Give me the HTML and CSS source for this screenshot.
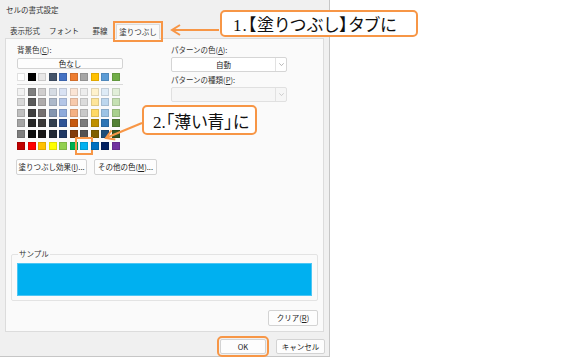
FILE: index.html
```
<html>
    <head>
        <title>セルの書式設定</title>
        <link rel="stylesheet" href="styles.css">
    </head>
    <body>
        <div class="dialog">
            <div class="titlebar">セルの書式設定</div>
            <div class="tabs">
                <span class="tab t1">表示形式</span>
                <span class="tab t2">フォント</span>
                <span class="tab t3">罫線</span>
                <span class="tab t4 active hl">塗りつぶし</span>
            </div>
            <div class="pane">
                <div class="cols">
                    <div class="bgcol">
                        <div class="label">背景色(<u>C</u>):</div>
                        <div class="btn nocolor">色なし</div>
                        <div class="swatches">
                            <i style="background:#ffffff"></i><i style="background:#000000"></i><i style="background:#e7e6e6"></i><i style="background:#44546a"></i><i style="background:#4472c4"></i><i style="background:#ed7d31"></i><i style="background:#a5a5a5"></i><i style="background:#ffc000"></i><i style="background:#5b9bd5"></i><i style="background:#70ad47"></i>
                        </div>
                        <div class="sep"></div>
                        <div class="swatches tints">
                            <i style="background:#f2f2f2"></i><i style="background:#7f7f7f"></i><i style="background:#d0cece"></i><i style="background:#d6dce4"></i><i style="background:#d9e2f3"></i><i style="background:#fbe5d5"></i><i style="background:#ededed"></i><i style="background:#fff2cc"></i><i style="background:#deebf6"></i><i style="background:#e2efd9"></i>
                            <i style="background:#d8d8d8"></i><i style="background:#595959"></i><i style="background:#aeabab"></i><i style="background:#adb9ca"></i><i style="background:#b4c6e7"></i><i style="background:#f7caac"></i><i style="background:#dbdbdb"></i><i style="background:#fee599"></i><i style="background:#bdd7ee"></i><i style="background:#c5e0b3"></i>
                            <i style="background:#bfbfbf"></i><i style="background:#3f3f3f"></i><i style="background:#757070"></i><i style="background:#8496b0"></i><i style="background:#8eaadb"></i><i style="background:#f4b183"></i><i style="background:#c9c9c9"></i><i style="background:#ffd965"></i><i style="background:#9cc3e5"></i><i style="background:#a8d08d"></i>
                            <i style="background:#a5a5a5"></i><i style="background:#262626"></i><i style="background:#3a3838"></i><i style="background:#323f4f"></i><i style="background:#2f5496"></i><i style="background:#c55a11"></i><i style="background:#7b7b7b"></i><i style="background:#bf9000"></i><i style="background:#2e75b5"></i><i style="background:#538135"></i>
                            <i style="background:#7f7f7f"></i><i style="background:#0c0c0c"></i><i style="background:#171616"></i><i style="background:#222a35"></i><i style="background:#1f3864"></i><i style="background:#833c0b"></i><i style="background:#525252"></i><i style="background:#7f6000"></i><i style="background:#1e4e79"></i><i style="background:#375623"></i>
                        </div>
                        <div class="swatches std">
                            <i style="background:#c00000"></i><i style="background:#ff0000"></i><i style="background:#ffc000"></i><i style="background:#ffff00"></i><i style="background:#92d050"></i><i style="background:#00b050"></i><i class="hl-sw" style="background:#00b0f0"></i><i style="background:#0070c0"></i><i style="background:#002060"></i><i style="background:#7030a0"></i>
                        </div>
                        <div class="btnrow">
                            <div class="btn effect">塗りつぶし効果(<u>I</u>)...</div>
                            <div class="btn more">その他の色(<u>M</u>)...</div>
                        </div>
                    </div>
                    <div class="patcol">
                        <div class="label">パターンの色(<u>A</u>):</div>
                        <div class="select">
                            <span class="val">自動</span>
                            <span class="drop"><svg width="5" height="3" viewBox="0 0 5 3"><path d="M0.3 0.3 L2.5 2.6 L4.7 0.3" fill="none" stroke="#999" stroke-width="0.7"/></svg></span>
                        </div>
                        <div class="label second">パターンの種類(<u>P</u>):</div>
                        <div class="select disabled">
                            <span class="val"></span>
                            <span class="drop"><svg width="5" height="3" viewBox="0 0 5 3"><path d="M0.3 0.3 L2.5 2.6 L4.7 0.3" fill="none" stroke="#bbb" stroke-width="0.7"/></svg></span>
                        </div>
                    </div>
                </div>
                <fieldset class="sample">
                    <legend>サンプル</legend>
                    <div class="fill"></div>
                </fieldset>
                <div class="clearrow">
                    <div class="btn clear">クリア(<u>R</u>)</div>
                </div>
            </div>
            <div class="footer">
                <div class="btn ok hl">OK</div>
                <div class="btn cancel">キャンセル</div>
            </div>
        </div>

        <div class="callout c1">1.【塗りつぶし】タブに</div>
        <div class="callout c2">2.「薄い青」に</div>

        <svg class="arrows" width="568" height="361">
            <line x1="219" y1="30" x2="172" y2="30" />
            <polyline points="180,25 172,30 180,35" />
            <line x1="142" y1="123" x2="107" y2="137.5" />
            <polyline points="111.5,130.3 106,138 115.3,139.5" />
        </svg>
    </body>
</html>
```

FILE: styles.css
```
body {
    margin: 0;
    width: 568px;
    height: 361px;
    position: relative;
    overflow: hidden;
    background: #fff;
    font-family: "Noto Sans CJK JP", sans-serif;
    color: #222;
}

.dialog {
    width: 329px;
    height: 356px;
    background: #f0f0f0;
    border-right: 1px solid #c6c6c6;
    border-bottom: 1px solid #c6c6c6;
    font-size: 7.5px;
    display: flex;
    flex-direction: column;
}

.titlebar {
    height: 20px;
    line-height: 20px;
    padding-left: 6px;
    color: #333;
}

.tabs {
    display: flex;
    align-items: flex-end;
    height: 18px;
    padding-left: 6px;
}

.tab {
    height: 14px;
    line-height: 14px;
    text-align: center;
    color: #333;
}
.t1 { width: 38px; }
.t2 { width: 40px; }
.t3 { width: 32px; }
.t4 { width: 44px; }

.tab.active {
    box-sizing: border-box;
    height: 15px;
    background: #fafafa;
    border: 1px solid #dcdcdc;
    border-bottom: none;
    margin-bottom: -1px;
    position: relative;
    z-index: 1;
}

.hl {
    outline: 2px solid #f79646;
    outline-offset: 1px;
}

.pane {
    box-sizing: border-box;
    height: 294px;
    margin: 0 5px;
    padding: 0 5px 5px;
    background: #fafafa;
    border: 1px solid #dcdcdc;
    display: flex;
    flex-direction: column;
}

.cols {
    display: flex;
    padding-top: 6px;
}

.bgcol {
    width: 154px;
    margin-left: 6px;
}

.label {
    height: 10px;
    line-height: 10px;
    color: #333;
}

.btn {
    box-sizing: border-box;
    background: #fdfdfd;
    border: 1px solid #d3d3d3;
    border-radius: 2px;
    text-align: center;
    color: #222;
}

.nocolor {
    width: 106px;
    height: 11px;
    line-height: 9px;
    margin-top: 3px;
}

.swatches {
    display: grid;
    grid-template-columns: repeat(10, 8px);
    column-gap: 2.55px;
    row-gap: 2.4px;
    margin-top: 4px;
}

.swatches i {
    display: block;
    width: 8px;
    height: 8px;
    box-shadow: inset 0 0 0 1px rgba(0, 0, 0, 0.12);
}

.swatches.tints {
    margin-top: 0;
}

.swatches.std {
    margin-top: 4px;
}

.hl-sw {
    outline: 2px solid #f79646;
    outline-offset: 3px;
}

.sep {
    width: 106px;
    height: 1px;
    background: #dadada;
    margin: 2.5px 0 3.5px;
}

.btnrow {
    display: flex;
    gap: 7px;
    margin-top: 9px;
    margin-left: -1px;
}

.btnrow .btn {
    height: 16px;
    line-height: 14px;
}
.effect { width: 71px; }
.more { width: 63px; }

.patcol {
    width: 116px;
}

.label.second {
    margin-top: 3px;
}

.select {
    box-sizing: border-box;
    display: flex;
    height: 15px;
    margin-top: 2px;
    background: #fff;
    border: 1px solid #d5d5d5;
    border-radius: 2px;
}

.select .val {
    flex: 1;
    text-align: center;
    line-height: 13px;
}

.select .drop {
    width: 10px;
    border-left: 1px solid #e2e2e2;
    display: flex;
    align-items: center;
    justify-content: center;
}

.select.disabled {
    background: #f6f6f6;
    border-color: #e0e0e0;
}

.sample {
    margin: auto 0 0;
    padding: 4px 5px 4px;
    border: 1px solid #e3e3e3;
    border-radius: 2px;
}

.sample legend {
    padding: 0 1px;
    margin-left: 1px;
    line-height: 10px;
    color: #333;
}

.fill {
    height: 33px;
    background: #00b0f0;
    box-shadow: inset 0 0 0 1px #4cc6f4;
}

.clearrow {
    display: flex;
    justify-content: flex-end;
    margin-top: 9px;
}

.clear {
    width: 50px;
    height: 16px;
    line-height: 14px;
}

.footer {
    flex: 1;
    display: flex;
    justify-content: flex-end;
    align-items: flex-start;
    gap: 10px;
    padding: 7px 4px 0 0;
}

.footer .btn {
    height: 15px;
    line-height: 13px;
}
.ok { width: 46px; }
.cancel { width: 49px; }

.callout {
    position: absolute;
    box-sizing: border-box;
    background: #fff;
    border: 2px solid #f79646;
    border-radius: 5px;
    font-family: "Liberation Serif", "Noto Sans CJK JP", serif;
    font-size: 17px;
    font-feature-settings: "palt";
    color: #111;
    white-space: nowrap;
    display: flex;
    align-items: center;
}

.c1 {
    left: 220px;
    top: 10px;
    width: 198px;
    height: 27px;
    padding-left: 11px;
    letter-spacing: 0.9px;
}

.c2 {
    left: 142px;
    top: 105px;
    width: 115px;
    height: 30px;
    padding-left: 9px;
}

.arrows {
    position: absolute;
    left: 0;
    top: 0;
    pointer-events: none;
}

.arrows line,
.arrows polyline {
    fill: none;
    stroke: #f79646;
    stroke-width: 2;
}
```
